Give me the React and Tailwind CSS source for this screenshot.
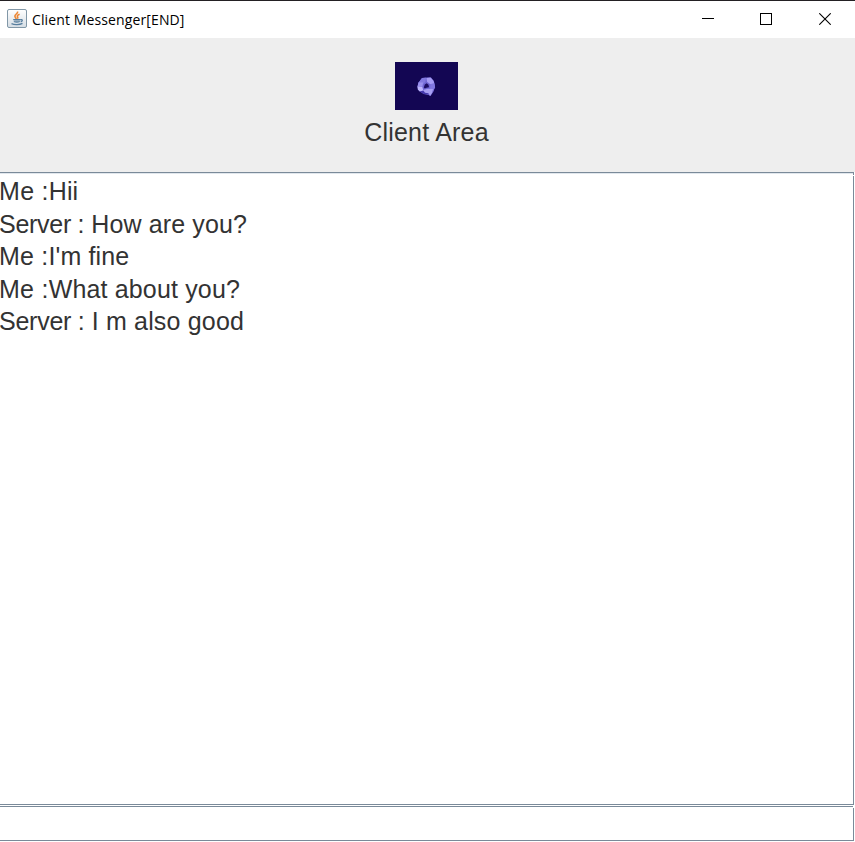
const messages = [
  { sender: 'Me', text: 'Hii', senderStyle: 'tracking-[0.3px]', textStyle: 'tracking-normal' },
  { sender: 'Server', text: ' How are you?', senderStyle: 'tracking-[-0.28px]', textStyle: 'tracking-[0.11px]' },
  { sender: 'Me', text: "I'm fine", senderStyle: 'tracking-[0.2px]', textStyle: 'tracking-[0.13px]' },
  { sender: 'Me', text: 'What about you?', senderStyle: 'tracking-[0.25px]', textStyle: 'tracking-[0.16px]' },
  { sender: 'Server', text: ' I m also good', senderStyle: 'tracking-[-0.25px]', textStyle: 'tracking-[0.18px]' },
];

function JavaIcon() {
  return (
    <svg width="20" height="19" viewBox="0 0 20 19" fill="none">
      <defs>
        <linearGradient id="tile" x1="0" y1="0" x2="0" y2="1">
          <stop offset="0" stopColor="#fff" />
          <stop offset="1" stopColor="#d5dde4" />
        </linearGradient>
      </defs>
      <rect x=".5" y=".5" width="19" height="18" rx="1.5" fill="url(#tile)" stroke="#8197a7" />
      <path d="M10.5 2.5c1 2-3 2.8-2.6 4.8.2 1 1.2 1.5 1.2 2.6M12.6 5.2c-2 .8-2.8 1.6-2 2.7.4.6.3 1.2-.2 1.8" stroke="#ec8735" strokeWidth="1.6" />
      <path d="M6.2 10.6h7.2M6.8 12.5c1.8.6 4.2.6 6 0M4.5 14.7c2.8 1.3 8 1.3 11-.3M13.4 10.8c2.4-.7 2.6 1.3.3 2" stroke="#587f9f" strokeWidth="1.3" />
      <path d="M7.2 11.4h5.6v1.2H7.2z" fill="#7896ae" />
    </svg>
  );
}

function Logo() {
  return (
    <svg width="63" height="48" viewBox="0 0 63 48" className="block bg-[#130653]">
      <path d="M27 16l4-.5 5 0 3 4 1 5-1.5 5-3 4.5-2-1-5-1-4-3-2-4.5 1-4z" fill="#6f65d2" />
      <path d="M27 16l4-.2-.5 4-3 3-4-2z" fill="#8279df" />
      <path d="M31.5 16l4-.6 2.8 3.2 1 3-4 .6-3.3-2.5z" fill="#a69cf4" />
      <path d="M35.5 22l4-.5.6 4-2 3.5-3-2.5z" fill="#8177df" />
      <path d="M23.4 20.5l4.6 0-.5 4.3-5 0z" fill="#9b91ee" />
      <path d="M22.3 24.5l5 .5 1 3.5-3 1.5-2.4-2.2z" fill="#bdb5fc" />
      <path d="M24.5 29.5l4-1 4 1 1.5 2.8-5-.3z" fill="#4439ad" />
      <path d="M28 28l5-1.3 5 .3-1 4-2 3-1.5-2.8-3.5-.5z" fill="#a79ff3" />
      <path d="M28.8 25.6l1-3 1.9-1.4 1.8 1.5.5 2.5-2.5.5-1.7.9z" fill="#1c0d62" />
    </svg>
  );
}

export default function App() {
  return (
    <div className="flex h-[842px] w-[855px] flex-col overflow-hidden bg-white font-['Liberation_Sans',Arial,sans-serif] text-[25px] text-[#333333]">
      <header className="flex h-[38px] shrink-0 items-center border-t border-[#232023] bg-white pb-[2px] pl-[7px]">
        <JavaIcon />
        <h1 className="ml-[5px] whitespace-nowrap pt-[2px] font-['Open_Sans','Noto_Sans',sans-serif] text-[14px] leading-5 tracking-[0.12px] text-black">Client Messenger[END]</h1>
        <div className="ml-auto flex h-full">
          <button aria-label="Minimize" className="flex w-[58px] items-center justify-center">
            <svg width="12" height="12" viewBox="0 0 12 12" shapeRendering="crispEdges"><path d="M0 5.5h12" stroke="#000" /></svg>
          </button>
          <button aria-label="Maximize" className="flex w-[58px] items-center justify-center">
            <svg width="12" height="12" viewBox="0 0 12 12" shapeRendering="crispEdges"><path d="M.5.5h11v11H.5z" fill="none" stroke="#000" /></svg>
          </button>
          <button aria-label="Close" className="flex w-[60px] items-center justify-center">
            <svg width="12" height="12" viewBox="0 0 12 12"><path d="M.3.3l11.4 11.4M11.7.3L.3 11.7" stroke="#000" strokeWidth="1.1" /></svg>
          </button>
        </div>
      </header>
      <section className="flex h-[134px] shrink-0 flex-col items-center bg-[#eeeeee] pr-[2px] pt-6">
        <Logo />
        <h2 className="mt-2 leading-[29px] tracking-[0.2px]">Client Area</h2>
      </section>
      <main className="relative mr-px h-[633px] shrink-0 border-y border-r border-[#7a8a99] bg-white after:absolute after:-right-px after:top-[2px] after:h-px after:w-px after:bg-white">
        <div className="border-t border-[#e1e7ed] pt-px">
          {messages.map(({ sender, text, senderStyle, textStyle }) => (
            <p key={text} className="-ml-px whitespace-pre leading-[32.5px]">
              <span className={senderStyle}>{sender} :</span>
              <span className={textStyle}>{text}</span>
            </p>
          ))}
        </div>
      </main>
      <div className="relative mr-px mt-px flex h-[35px] shrink-0 after:absolute after:right-0 after:top-0 after:h-[2px] after:w-px after:bg-white">
        <input aria-label="Message" className="h-full w-full border-y border-r border-[#7a8a99] bg-white px-1 outline-none" />
      </div>
    </div>
  );
}
